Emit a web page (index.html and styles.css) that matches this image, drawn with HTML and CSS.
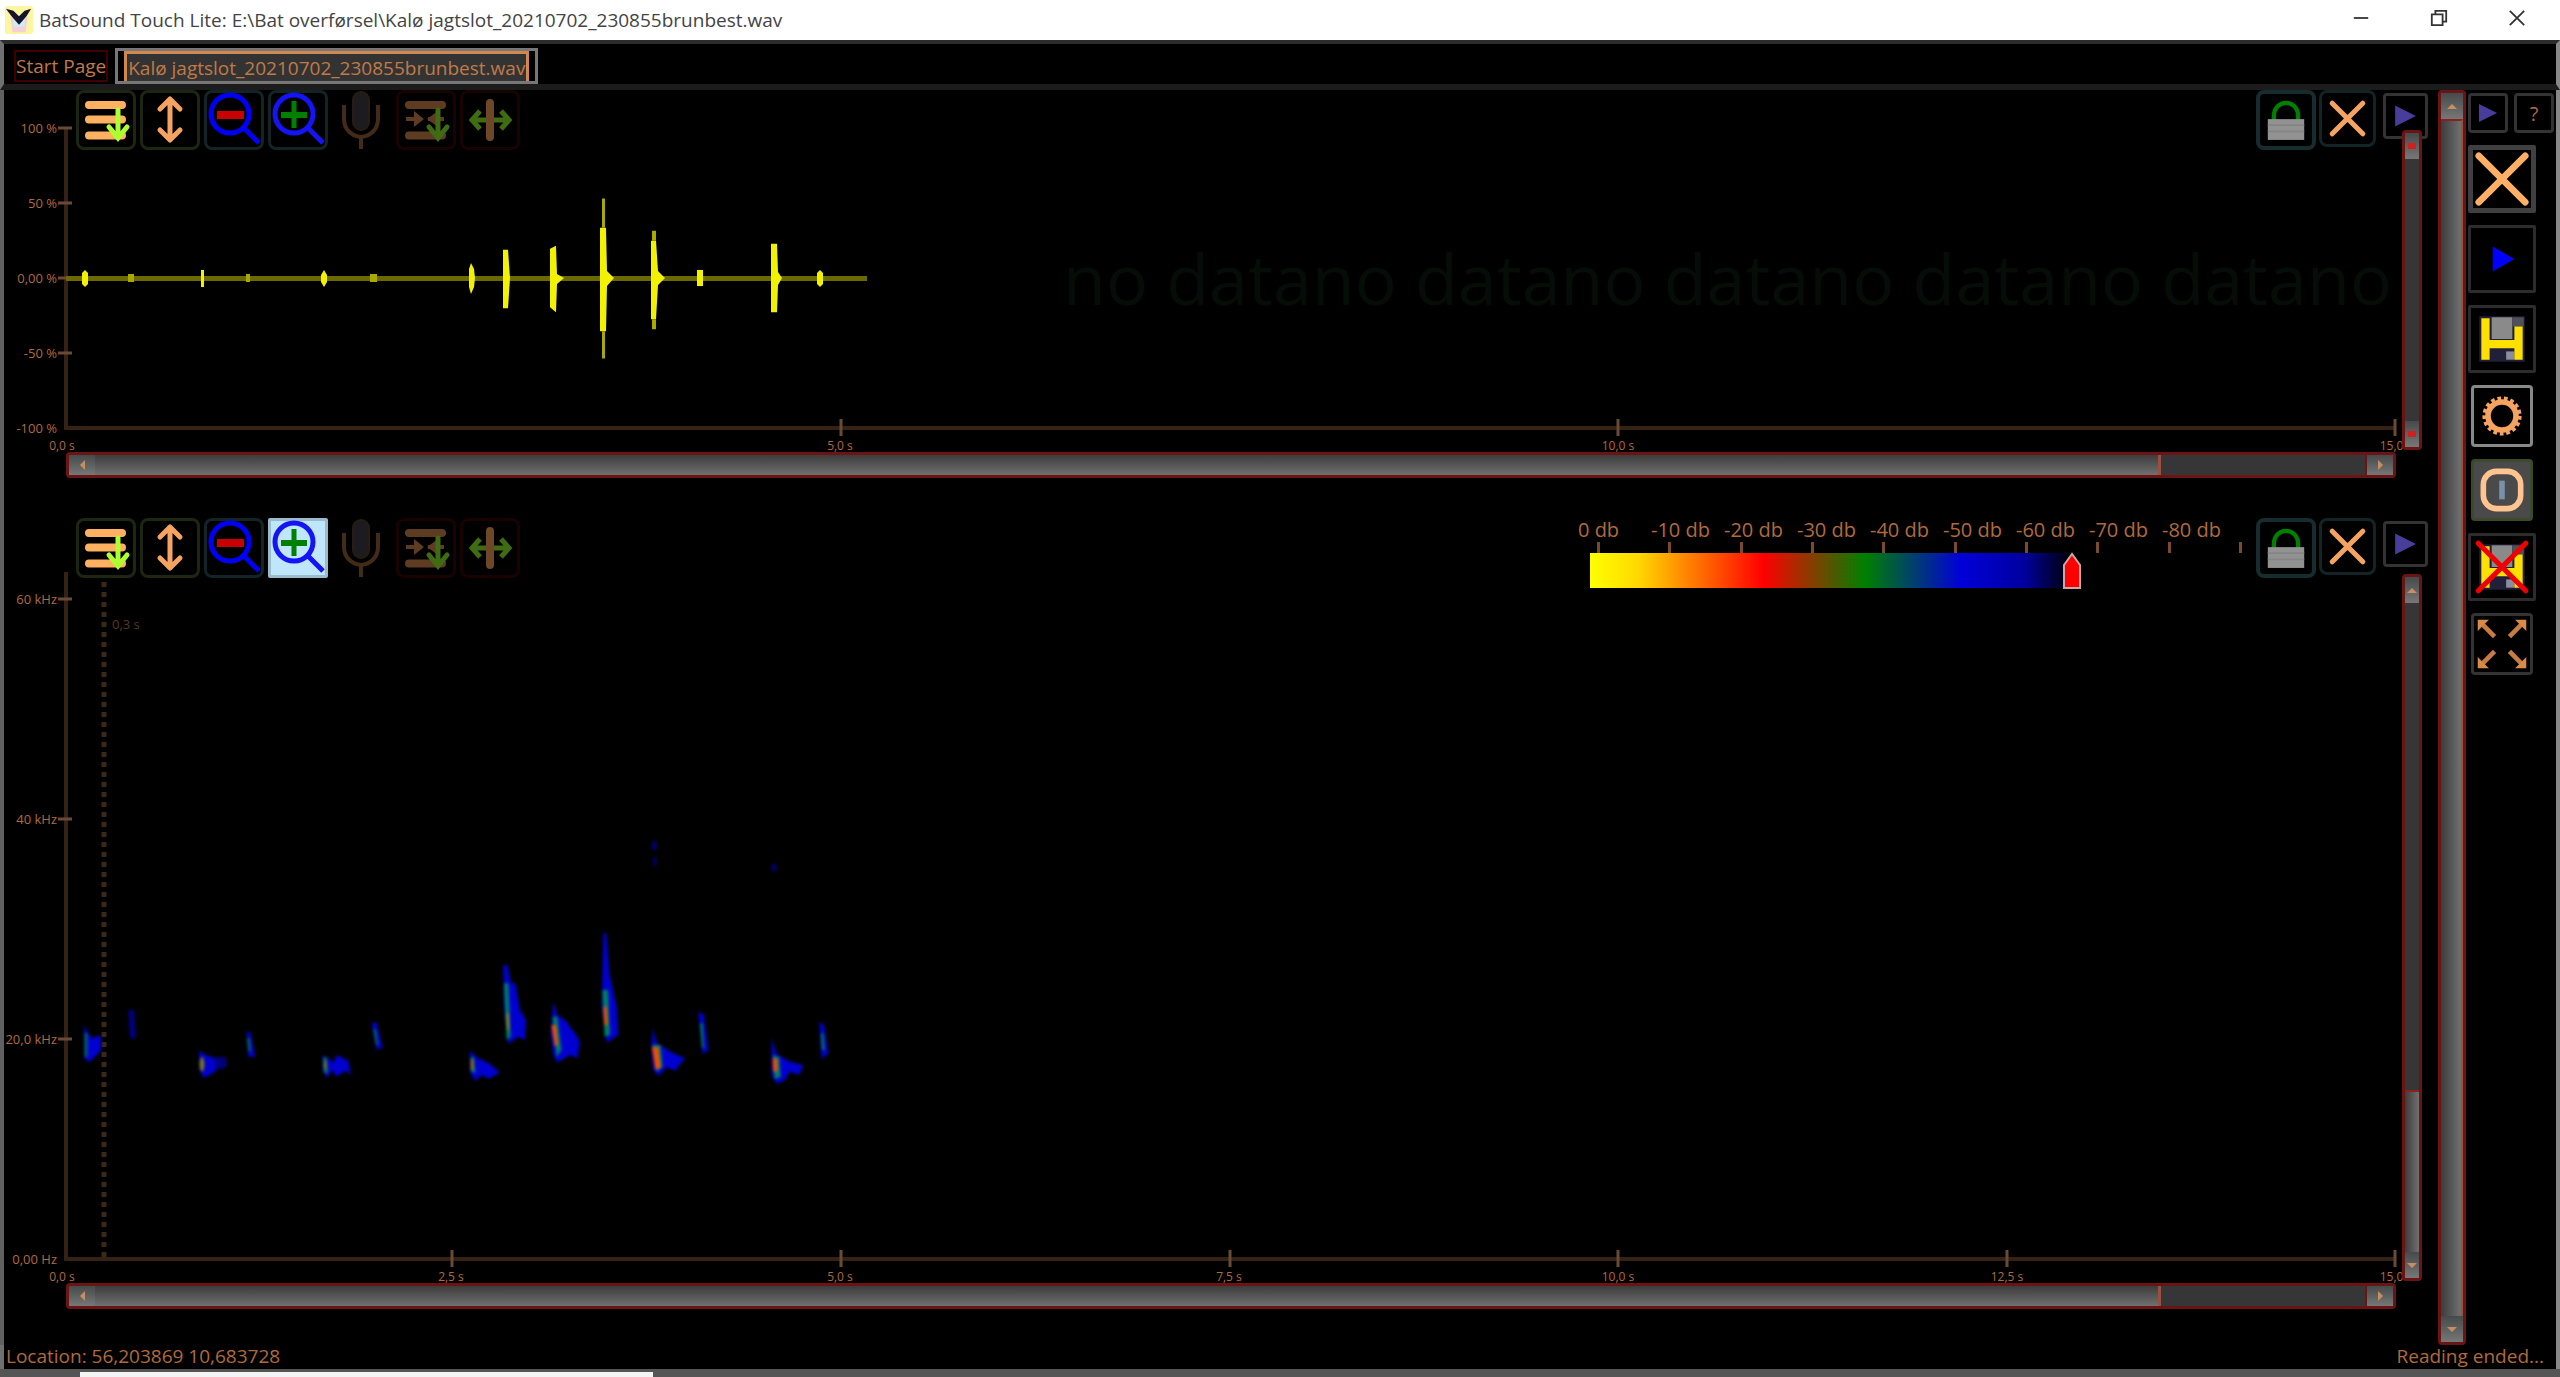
FILE: index.html
```html
<!DOCTYPE html>
<html lang="en">
<head>
  <meta charset="UTF-8">
  <meta name="viewport" content="width=device-width, initial-scale=1.0">
  <title>BatSound Touch Lite</title>
  <link rel="stylesheet" href="styles.css">
</head>
<body>
  <!-- shared icons -->
  <svg class="sprite" width="0" height="0" aria-hidden="true">
    <symbol id="i-list" viewBox="0 0 60 60">
      <path d="M13 15H46M13 29.500H46M13 45.500H46" stroke="#ffb060" stroke-width="8" stroke-linecap="round"/>
      <path d="M42 20V47M33 37L42 48L51 37" fill="none" stroke="#adff2f" stroke-width="5" stroke-linecap="round"/>
    </symbol>
    <symbol id="i-vert" viewBox="0 0 60 60">
      <path d="M30 10V49M20 19L30 9L40 19M20 40L30 50L40 40" fill="none" stroke="#f4a460" stroke-width="5" stroke-linecap="round" stroke-linejoin="round"/>
    </symbol>
    <symbol id="i-out" viewBox="0 0 60 60">
      <circle cx="26" cy="24" r="19" fill="none" stroke="#0000f5" stroke-width="5"/>
      <path d="M40 38L55 53" stroke="#0000f5" stroke-width="5"/>
      <path d="M13 25H40" stroke="#c80000" stroke-width="8"/>
    </symbol>
    <symbol id="i-in" viewBox="0 0 60 60">
      <circle cx="26" cy="24" r="19" fill="none" stroke="#1414f5" stroke-width="5"/>
      <path d="M40 38L55 53" stroke="#1414f5" stroke-width="5"/>
      <path d="M13 25H39" stroke="#008000" stroke-width="6"/><path d="M26 11V38" stroke="#008000" stroke-width="5"/>
    </symbol>
    <symbol id="i-mic" viewBox="0 0 60 60">
      <rect x="21" y="2" width="16" height="38" rx="8" fill="#1b1b20" stroke="#2a1c12" stroke-width="2"/>
      <path d="M12 15V29C12 40 20 46 29 47C38 46 46 40 46 29V15M29 47V59" fill="none" stroke="#432b18" stroke-width="4"/>
    </symbol>
    <symbol id="i-merge" viewBox="0 0 60 60">
      <path d="M13 15H46M13 45.500H46" stroke="#5e3c22" stroke-width="8" stroke-linecap="round"/>
      <path d="M10 29H26M48 29H32" stroke="#5e3c22" stroke-width="4"/>
      <path d="M18 21L28 29L18 37ZM42 21L31 29L42 37Z" fill="#5e3c22"/>
      <path d="M42 20V47M33 37L42 48L51 37" fill="none" stroke="#3f6b12" stroke-width="5" stroke-linecap="round"/>
    </symbol>
    <symbol id="i-split" viewBox="0 0 60 60">
      <path d="M30 13V47" stroke="#6e4628" stroke-width="8" stroke-linecap="round"/>
      <path d="M12 30H26M34 30H48M20 21L12 30L20 39M41 21L49 30L41 39" fill="none" stroke="#3f6b12" stroke-width="5"/>
    </symbol>
    <symbol id="i-lock" viewBox="0 0 60 60">
      <path d="M16 31V26C16 5 44 5 44 26V31" fill="none" stroke="#008000" stroke-width="5"/>
      <rect x="9" y="29" width="42" height="24" fill="#929292"/>
      <path d="M9 36H51M9 43H51" stroke="#858585" stroke-width="2"/>
    </symbol>
    <symbol id="i-x" viewBox="0 0 60 60">
      <path d="M12 12L48 48M48 12L12 48" stroke="#f4a460" stroke-width="6" stroke-linecap="round"/>
    </symbol>
    <symbol id="i-play" viewBox="0 0 60 60">
      <path d="M14 14L46 30L14 46Z" fill="#483d9b"/>
    </symbol>
    <symbol id="i-save" viewBox="0 0 60 60">
      <rect x="8" y="8" width="44" height="44" fill="#20203a"/>
      <rect x="20" y="9" width="20" height="21" fill="#8a8a8a"/><rect x="40" y="9" width="11" height="9" fill="#50505a"/>
      <rect x="34" y="42" width="8" height="8" fill="#8c8ca0"/>
      <path d="M14 10V50M46 18V50M14 35H46" stroke="#ffe000" stroke-width="8"/>
    </symbol>
  </svg>

  <div class="window">
    <header class="titlebar">
      <svg class="app-icon" viewBox="0 0 30 30">
        <rect width="30" height="30" rx="3" fill="#fdf6a0"/>
        <path d="M6 12L24 12L22 28H8Z" fill="#f6d0d8"/>
        <path d="M9 14L15 20L21 14V22H9Z" fill="#c8f0fa"/>
        <path d="M1 3L9 5L15 11L21 5L28 3L23 11L15 20L7 11Z" fill="#14142a"/>
      </svg>
      <span class="title">BatSound Touch Lite: E:\Bat overførsel\Kalø jagtslot_20210702_230855brunbest.wav</span>
      <div class="win-controls">
        <button aria-label="Minimize"><svg viewBox="0 0 20 20"><path d="M2 10H18"/></svg></button>
        <button aria-label="Restore"><svg viewBox="0 0 20 20"><path d="M2 6H14V18H2ZM6 6V2H18V14H14"/></svg></button>
        <button aria-label="Close"><svg viewBox="0 0 20 20"><path d="M2 2L18 18M18 2L2 18"/></svg></button>
      </div>
    </header>

    <nav class="tabs">
      <button class="tab"><span>Start Page</span></button>
      <button class="tab active"><span>Kalø jagtslot_20210702_230855brunbest.wav</span></button>
    </nav>

    <main class="workspace">
      <div class="charts">

        <!-- oscillogram -->
        <section class="panel wave">
          <div class="y-axis"><span>100 %</span><span>50 %</span><span>0,00 %</span><span>-50 %</span><span>-100 %</span></div>
          <div class="plot">
            <div class="no-data">no datano datano datano datano datano</div>
            <svg viewBox="0 0 2330 298" preserveAspectRatio="none">
              <path d="M0 0V298H2330" fill="none" stroke="#352214" stroke-width="4"/>
              <path d="M-8 0H6M-8 74.500H6M-8 149H6M-8 223.500H6M775 289V306M1552 289V306M2329 289V306" stroke="#6b4a35" stroke-width="3"/>
              <path d="M0 149.500H801" stroke="#6a6a00" stroke-width="5"/>
              <g fill="#f2f200">
                <path d="M16 144L19 141L22 144V155L19 158L16 155Z"/>
                <path d="M135 141H138V158H135Z"/>
                <path d="M255 146L258 141L261 146V153L258 158L255 153Z"/>
                <path d="M403 140L405 134L408 140L409 149L408 158L405 165L403 158Z"/>
                <path d="M437 121H442L444 149L442 179H437Z"/>
                <path d="M484 120L490 117L491 145L498 149L491 155L490 183L484 178Z"/>
                <path d="M534 99H540L541 142L548 149L541 157L540 202H534Z"/>
                <path d="M585 112H590L592 142L599 149L592 156L590 190H585Z"/>
                <path d="M631 141H637V157H631Z"/>
                <path d="M705 115H711L712 143L716 149L712 156L711 183H705Z"/>
                <path d="M751 144L754 141L757 144V155L754 158L751 155Z"/>
              </g>
              <g fill="#a8a800">
                <path d="M62 145H68V153H62ZM180 145H184V153H180ZM304 145H311V153H304Z"/>
                <path d="M536 70H539V99H536ZM536 202H539V229H536ZM586 102H590V112H586ZM586 190H590V200H586Z"/>
              </g>
            </svg>
          </div>
          <div class="v-scroll locked">
            <button aria-label="Scroll up"><i class="stop"></i></button>
            <div class="track"></div>
            <button aria-label="Scroll down"><i class="stop"></i></button>
          </div>
          <div class="x-axis"><span>0,0 s</span><span>5,0 s</span><span>10,0 s</span><span>15,0 s</span></div>
          <div class="h-scroll">
            <button aria-label="Scroll left"><i class="left"></i></button>
            <div class="track"><div class="thumb"></div></div>
            <button aria-label="Scroll right"><i class="right"></i></button>
          </div>

          <div class="tools">
            <button class="tool green" aria-label="Functions"><svg><use href="#i-list"/></svg></button>
            <button class="tool green" aria-label="Fit amplitude"><svg><use href="#i-vert"/></svg></button>
            <button class="tool teal" aria-label="Zoom out"><svg><use href="#i-out"/></svg></button>
            <button class="tool teal" aria-label="Zoom in"><svg><use href="#i-in"/></svg></button>
            <button class="tool bare" aria-label="Record"><svg><use href="#i-mic"/></svg></button>
            <button class="tool off" aria-label="Merge"><svg><use href="#i-merge"/></svg></button>
            <button class="tool off" aria-label="Split"><svg><use href="#i-split"/></svg></button>
          </div>
          <div class="panel-tools">
            <button class="tool teal thick" aria-label="Lock"><svg><use href="#i-lock"/></svg></button>
            <button class="tool teal mid" aria-label="Close panel"><svg><use href="#i-x"/></svg></button>
            <button class="tool grey small" aria-label="Expand tools"><svg><use href="#i-play"/></svg></button>
          </div>
        </section>

        <!-- spectrogram -->
        <section class="panel spectro">
          <div class="y-axis"><span>60 kHz</span><span>40 kHz</span><span>20,0 kHz</span><span>0,00 Hz</span></div>
          <div class="plot">
            <svg viewBox="0 0 2330 687" preserveAspectRatio="none">
              <defs>
                <filter id="soft" x="-20%" y="-20%" width="140%" height="140%" color-interpolation-filters="sRGB"><feGaussianBlur stdDeviation="5"/></filter>
              </defs>
              <path d="M0 0V687H2330" fill="none" stroke="#352214" stroke-width="4"/>
              <path d="M-8 27H6M-8 247H6M-8 467H6M386 678V695M775 678V695M1164 678V695M1552 678V695M1941 678V695M2329 678V695" stroke="#6b4a35" stroke-width="3"/>
              <path d="M38 0V687" stroke="#3c2817" stroke-width="5" stroke-dasharray="5 5"/>
              <g transform="translate(-26 248) scale(.3333)" filter="url(#soft)">
                <g fill="#0000d0">
                  <path d="M132 615L142 635L155 655L182 645L184 690L150 725L134 718Z"/>
                  <path d="M265 570H282L288 655H270Z" fill="#000080"/>
                  <path d="M478 690L490 702L525 715V755L490 775L478 745Z"/>
                  <path d="M525 712L558 712L560 740L525 752Z" fill="#000080"/>
                  <path d="M620 632L632 640L645 710H625Z"/>
                  <path d="M848 705L870 718L880 730L890 705L925 722L932 765L915 752L890 770L875 750L862 775L848 750Z"/>
                  <path d="M995 608H1010L1027 682L1010 690Z"/>
                </g>
                <path d="M134 640H142V710H134ZM621 655H629L632 695H626ZM850 712H860L864 760H852ZM1000 625L1008 630L1014 675H1008Z" fill="#007060"/>
                <ellipse cx="486" cy="733" rx="7" ry="22" fill="#7d7a20"/>
                <ellipse cx="856" cy="735" rx="5" ry="14" fill="#647a20"/>
              </g>
              <g transform="translate(374 248) scale(.3333)" filter="url(#soft)">
                <g fill="#0000d0">
                  <path d="M90 692L108 710L150 732L180 758L145 776L125 765L105 783L90 755Z"/>
                  <path d="M190 435H202L213 490L226 490L240 570L258 600L255 660L235 650L205 672L192 560Z"/>
                  <path d="M340 545L352 585L375 600L405 640L420 665L412 715L390 705L352 728L340 705L332 640Z"/>
                  <path d="M490 340H499L508 460L530 560L535 645L500 668L485 560Z"/>
                  <path d="M638 625L650 668L700 700L735 715L705 752L680 742L655 768L640 750L634 690Z"/>
                  <path d="M775 575L792 585L805 690L788 703Z"/>
                  <path d="M995 655L1010 702L1050 725L1090 735L1078 765L1050 755L1035 780L1010 792L995 765Z"/>
                  <path d="M1138 605L1152 615L1165 700L1145 718Z"/>
                </g>
                <path d="M192 490H205L212 650L200 660ZM338 590H352L364 690L350 712ZM487 510H504L510 645L494 650ZM636 675H662L668 740L650 755ZM780 610H788L792 685H786ZM998 705L1018 712L1022 770L1004 778ZM1143 640H1150L1154 690H1146ZM92 712H102L106 760L94 755Z" fill="#008060"/>
                <path d="M198 580H206L208 630H202Z" fill="#a08020"/>
                <path d="M334 615L348 616L354 676L344 678ZM490 560L500 560L503 615L493 615ZM636 682H655L662 745L646 748ZM998 716H1012V755H1000Z" fill="#f05000"/>
                <path d="M92 718H100V750H92Z" fill="#a06a10"/>
                <path d="M636 64H650V90H636ZM640 110H649V138H640ZM995 132H1009V153H995Z" fill="#000070"/>
              </g>
            </svg>
            <span class="cursor-label">0,3 s</span>
          </div>
          <div class="v-scroll">
            <button aria-label="Scroll up"><i class="up"></i></button>
            <div class="track"><div class="thumb"></div></div>
            <button aria-label="Scroll down"><i class="down"></i></button>
          </div>
          <div class="x-axis"><span>0,0 s</span><span>2,5 s</span><span>5,0 s</span><span>7,5 s</span><span>10,0 s</span><span>12,5 s</span><span>15,0 s</span></div>
          <div class="h-scroll">
            <button aria-label="Scroll left"><i class="left"></i></button>
            <div class="track"><div class="thumb"></div></div>
            <button aria-label="Scroll right"><i class="right"></i></button>
          </div>

          <div class="tools">
            <button class="tool green" aria-label="Functions"><svg><use href="#i-list"/></svg></button>
            <button class="tool green" aria-label="Fit amplitude"><svg><use href="#i-vert"/></svg></button>
            <button class="tool teal" aria-label="Zoom out"><svg><use href="#i-out"/></svg></button>
            <button class="tool teal hover" aria-label="Zoom in"><svg><use href="#i-in"/></svg></button>
            <button class="tool bare" aria-label="Record"><svg><use href="#i-mic"/></svg></button>
            <button class="tool off" aria-label="Merge"><svg><use href="#i-merge"/></svg></button>
            <button class="tool off" aria-label="Split"><svg><use href="#i-split"/></svg></button>
          </div>
          <div class="legend">
            <div class="legend-labels"><span>0 db</span><span>-10 db</span><span>-20 db</span><span>-30 db</span><span>-40 db</span><span>-50 db</span><span>-60 db</span><span>-70 db</span><span>-80 db</span></div>
            <div class="legend-ticks"><i></i><i></i><i></i><i></i><i></i><i></i><i></i><i></i><i></i><i></i></div>
            <div class="legend-bar">
              <input type="range" min="-90" max="0" value="-67" aria-label="Threshold">
              <svg class="marker" viewBox="0 0 20 38"><path d="M2 37V14L10 3L18 14V37Z" fill="#f00" stroke="#c8a8a8" stroke-width="2"/></svg>
            </div>
          </div>
          <div class="panel-tools">
            <button class="tool teal thick" aria-label="Lock"><svg><use href="#i-lock"/></svg></button>
            <button class="tool teal mid" aria-label="Close panel"><svg><use href="#i-x"/></svg></button>
            <button class="tool grey small" aria-label="Expand tools"><svg><use href="#i-play"/></svg></button>
          </div>
        </section>
      </div>

      <div class="v-scroll main-scroll">
        <button aria-label="Scroll up"><i class="up"></i></button>
        <div class="track"><div class="thumb"></div></div>
        <button aria-label="Scroll down"><i class="down"></i></button>
      </div>

      <aside class="sidebar">
        <div class="side-top">
          <button class="tool grey" aria-label="Expand"><svg><use href="#i-play"/></svg></button>
          <button class="tool grey">?</button>
        </div>
        <button class="tool side strong" aria-label="Close"><svg viewBox="0 0 60 60"><path d="M6 6L54 54M54 6L6 54" stroke="#ffb066" stroke-width="7" stroke-linecap="round"/></svg></button>
        <button class="tool side" aria-label="Play"><svg viewBox="0 0 60 60"><path d="M21 18L42 30L21 42Z" fill="#0000ff"/></svg></button>
        <button class="tool side" aria-label="Save"><svg><use href="#i-save"/></svg></button>
        <button class="tool side bright" aria-label="Settings"><svg viewBox="0 0 60 60">
          <circle cx="30" cy="30" r="19" fill="none" stroke="#f4a460" stroke-width="4" stroke-dasharray="4 3"/>
          <circle cx="30" cy="30" r="15" fill="none" stroke="#f4a460" stroke-width="6"/></svg></button>
        <button class="tool side info" aria-label="Info"><svg viewBox="0 0 60 60">
          <rect x="10" y="10" width="40" height="40" rx="14" fill="none" stroke="#ffc490" stroke-width="6"/>
          <path d="M30 20V40" stroke="#7890a8" stroke-width="6"/></svg></button>
        <button class="tool side" aria-label="Delete"><svg viewBox="0 0 60 60">
          <use href="#i-save"/>
          <path d="M7 7L53 53M53 7L7 53" stroke="#f00000" stroke-width="5" stroke-linecap="round"/></svg></button>
        <button class="tool side mid-grey" aria-label="Full screen"><svg viewBox="0 0 60 60">
          <path d="M8 8L22 22M52 8L38 22M8 52L22 38M52 52L38 38" stroke="#c87c40" stroke-width="5"/>
          <path d="M4 4H16L4 16ZM56 4H44L56 16ZM4 56H16L4 44ZM56 56H44L56 44Z" fill="#d88a48"/></svg></button>
      </aside>
    </main>

    <footer class="statusbar"><span>Location: 56,203869 10,683728</span><span>Reading ended...</span></footer>
  </div>
  <div class="taskbar"><div class="taskbar-search"></div></div>
</body>
</html>
```
FILE: styles.css
```css
* {
  box-sizing: border-box;
}
body {
  margin: 0;
  height: 100vh;
  display: flex;
  flex-direction: column;
  overflow: hidden;
  background: #000;
  color: #b06a3c;
  font-family: "Open Sans", "Noto Sans", sans-serif;
  font-size: 19px;
}
button {
  padding: 0;
  font: inherit;
  color: inherit;
  background: none;
  border: none;
}
.sprite {
  position: absolute;
}
.window {
  flex: 1;
  min-height: 0;
  display: flex;
  flex-direction: column;
}

/* title bar */
.titlebar {
  height: 40px;
  display: flex;
  align-items: center;
  padding: 0 24px 0 5px;
  background: #fff;
  color: #444;
}
.app-icon {
  width: 28px;
  height: 30px;
}
.title {
  flex: 1;
  margin-left: 6px;
}
.win-controls {
  display: flex;
  gap: 40px;
}
.win-controls button {
  width: 38px;
  height: 38px;
}
.win-controls svg {
  width: 18px;
  height: 18px;
  fill: none;
  stroke: #333;
  stroke-width: 2;
}

/* tabs */
.tabs {
  height: 50px;
  display: flex;
  align-items: flex-end;
  gap: 7px;
  padding: 0 10px;
  background: #000;
  border-top: 4px solid #2c2c2c;
  border-bottom: 6px solid #1c1c1c;
  border-left: 4px solid #707070;
  border-right: 4px solid #888;
}
.tab {
  height: 32px;
  margin-bottom: 2px;
  line-height: 28px;
  border: 2px solid #400000;
  color: #c07a48;
}
.tab.active {
  height: 36px;
  margin-bottom: 0;
  padding: 0 6px;
  border: 3px solid #777;
}
.tab span {
  display: block;
}
.tab.active span {
  height: 30px;
  padding: 0 1px;
  line-height: 28px;
  background: #333;
  border: 3px solid #d08850;
  border-bottom: none;
}

.workspace {
  flex: 1;
  min-height: 0;
  display: flex;
  border-left: 4px solid #606060;
  border-right: 4px solid #888;
}
.charts {
  flex: 1;
  display: flex;
  flex-direction: column;
  gap: 40px;
  padding-bottom: 36px;
}

/* chart panels */
.panel {
  position: relative;
  min-height: 0;
  display: grid;
  grid-template-columns: 62px minmax(0, 1fr) 42px;
  grid-template-rows: minmax(0, 1fr) 24px 26px;
}
.wave {
  flex: 350;
  padding-top: 38px;
}
.spectro {
  flex: 737;
  padding-top: 54px;
}
.y-axis {
  display: flex;
  flex-direction: column;
  justify-content: space-between;
  align-items: flex-end;
  margin: -8px 0;
  padding-right: 9px;
  font-size: 13px;
  line-height: 16px;
  white-space: nowrap;
}
.spectro .y-axis {
  margin-top: 19px;
}
.plot {
  position: relative;
}
.plot svg {
  display: block;
  width: 100%;
  height: 100%;
  overflow: visible;
}
.no-data {
  position: absolute;
  top: 90px;
  right: 4px;
  font-size: 70px;
  line-height: 120px;
  white-space: nowrap;
  color: #060c08;
}
.cursor-label {
  position: absolute;
  left: 46px;
  top: 44px;
  font-size: 13px;
  line-height: 16px;
  color: #5a3820;
}
.x-axis {
  grid-column: 2;
  grid-row: 2;
  display: flex;
  justify-content: space-between;
  margin: 0 -28px 0 -32px;
  padding-top: 10px;
  font-size: 12px;
  line-height: 16px;
}
.x-axis span {
  width: 56px;
  text-align: center;
}

/* scroll bars */
.h-scroll {
  grid-column: 2;
  grid-row: 3;
  display: flex;
  border: 3px solid #6a1414;
  border-radius: 4px;
}
.v-scroll {
  grid-column: 3;
  grid-row: 1 / 3;
  width: 20px;
  margin: 2px 0 2px 6px;
  display: flex;
  flex-direction: column;
  border: 3px solid #6a1414;
  border-radius: 4px;
  z-index: 2;
}
.h-scroll button,
.v-scroll button {
  flex: none;
  display: flex;
  align-items: center;
  justify-content: center;
  background: linear-gradient(#454a4a, #777);
}
.h-scroll button {
  width: 26px;
}
.v-scroll button {
  height: 26px;
}
.track {
  flex: 1;
  display: flex;
  background: #363636;
}
.h-scroll .track {
  border: solid #6a1414;
  border-width: 0 2px 0 0;
}
.h-scroll .thumb {
  width: 91%;
  background: linear-gradient(#3c3c3c, #707070);
  border-right: 3px solid #985040;
}
.v-scroll .track {
  flex-direction: column;
  justify-content: flex-end;
}
.v-scroll .thumb {
  height: 25%;
  background: linear-gradient(90deg, #3c3c3c, #707070);
  border-top: 2px solid #8a2020;
}
.main-scroll {
  width: 28px;
  margin: 0;
}
.main-scroll .thumb {
  height: 100%;
  border-right: 2px solid #985040;
}
.v-scroll i,
.h-scroll i {
  border: 5px solid transparent;
}
.v-scroll .up {
  border-bottom-color: #c88e60;
  border-top: none;
}
.v-scroll .down {
  border-top-color: #c88e60;
  border-bottom: none;
}
.h-scroll .left {
  border-right-color: #c88e60;
  border-left: none;
}
.h-scroll .right {
  border-left-color: #c88e60;
  border-right: none;
}
.v-scroll .stop {
  border: none;
  width: 8px;
  height: 6px;
  background: #d02020;
}

/* tool buttons */
.tools {
  position: absolute;
  top: 0;
  left: 72px;
  display: flex;
  gap: 4px;
}
.panel-tools {
  position: absolute;
  top: 0;
  right: 10px;
  display: flex;
  align-items: flex-start;
  gap: 3px;
}
.tool {
  width: 60px;
  height: 60px;
  border: 3px solid #000;
  border-radius: 8px;
  background: #000;
}
.tool svg {
  display: block;
  width: 100%;
  height: 100%;
}
.tools .tool svg {
  width: 60px;
  height: 60px;
  margin: -3px;
}
.tool.green {
  border-color: #1c2610;
}
.tool.teal {
  border-color: #122426;
}
.tool.thick {
  border-width: 4px;
  border-color: #162c2e;
}
.tool.bare {
  border-color: transparent;
}
.tool.off {
  border-color: #180202;
}
.tool.hover {
  background: #bfe6fa;
  border-color: #98bccb;
  border-radius: 2px;
}
.tool.mid {
  width: 57px;
  height: 57px;
}
.tool.grey {
  border-color: #333;
  border-radius: 4px;
}
.tool.small {
  width: 45px;
  height: 46px;
  margin: 3px 0 0 4px;
}

/* db colour legend */
.legend {
  position: absolute;
  top: 0;
  right: 188px;
  width: 672px;
}
.legend-labels {
  display: flex;
  height: 24px;
  font-size: 20px;
  line-height: 24px;
}
.legend-labels span {
  width: 73px;
  flex: none;
  white-space: nowrap;
}
.legend-ticks {
  display: flex;
  justify-content: space-between;
  padding: 0 8px 0 19px;
}
.legend-ticks i {
  width: 3px;
  height: 11px;
  background: #7a4a2a;
}
.legend-bar {
  position: relative;
  width: 482px;
  height: 35px;
  margin-left: 12px;
  background: linear-gradient(90deg, #ff0 0, #ffd800 10%, #f00 36%, #008000 57%, #0000d8 77%, #0000a0 90%, #000 100%);
}
.legend-bar input {
  width: 100%;
  height: 100%;
  margin: 0;
  opacity: 0;
}
.marker {
  position: absolute;
  right: -10px;
  top: -2px;
  width: 20px;
  height: 38px;
  pointer-events: none;
}

/* right tool column */
.sidebar {
  width: 90px;
  display: flex;
  flex-direction: column;
  gap: 12px;
  padding: 3px 2px 0 2px;
}
.side-top {
  display: flex;
  justify-content: space-between;
}
.side-top .tool {
  width: 40px;
  height: 40px;
  font-size: 20px;
}
.tool.side {
  width: 68px;
  height: 68px;
  border-color: #2c2c2c;
  border-radius: 2px;
}
.tool.side.strong {
  border-width: 5px;
  border-color: #404040;
}
.tool.side.bright,
.tool.side.info,
.tool.side.mid-grey {
  width: 62px;
  height: 62px;
  margin-left: 3px;
  border-color: #888;
  border-radius: 4px;
}
.tool.side.info {
  background: #4a4a4a;
  border-color: #3c4a2c;
}
.tool.side.mid-grey {
  border-color: #333;
}

.statusbar {
  height: 24px;
  display: flex;
  justify-content: space-between;
  padding: 0 12px 0 2px;
  line-height: 22px;
  border-left: 4px solid #707070;
  border-right: 4px solid #888;
}
.taskbar {
  height: 8px;
  background: #555;
}
.taskbar-search {
  width: 573px;
  height: 5px;
  margin: 3px 0 0 80px;
  background: #f4f4f4;
}
```
